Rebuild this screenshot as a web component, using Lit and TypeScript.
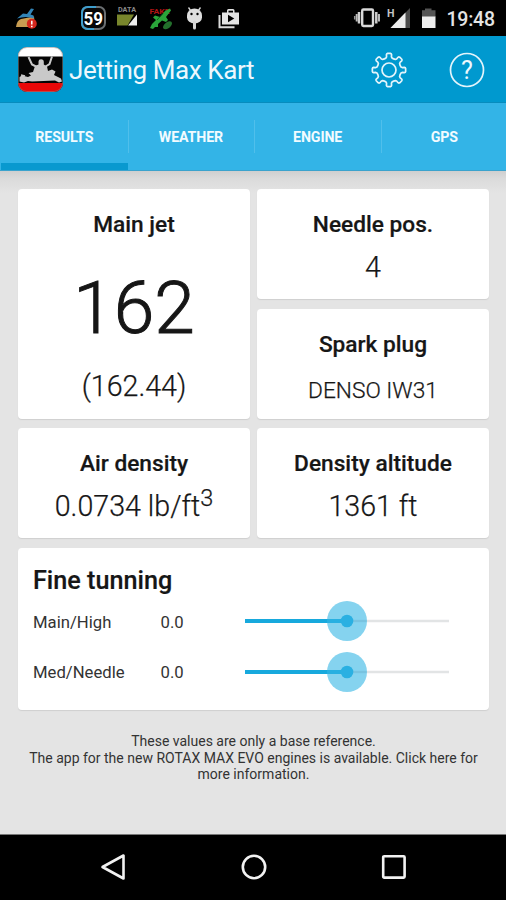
import { LitElement, html, css, svg } from "lit";
import { customElement, property } from "lit/decorators.js";

const gearPath = (() => {
  const at = (r: number, deg: number) => {
    const a = ((deg - 90) * Math.PI) / 180;
    return `${(18 + r * Math.cos(a)).toFixed(2)} ${(18 + r * Math.sin(a)).toFixed(2)}`;
  };
  let d = "";
  for (let i = 0; i < 8; i++) {
    const c = i * 45;
    d += `${i ? "L" : "M"}${at(12.4, c - 14)}L${at(13.4, c - 10.5)}L${at(15.6, c - 9.5)}Q${at(16.6, c - 8.5)} ${at(16.7, c - 5)}`;
    d += `L${at(16.7, c + 5)}Q${at(16.6, c + 8.5)} ${at(15.6, c + 9.5)}L${at(13.4, c + 10.5)}L${at(12.4, c + 14)}`;
    d += `Q${at(11.8, c + 22.5)} ${at(12.4, c + 31)}`;
  }
  return d + "Z";
})();

@customElement("status-bar")
class StatusBar extends LitElement {
  static styles = css`
    :host { display: flex; height: 36px; background: #000; }
    svg { display: block; width: 506px; height: 36px; }
    .clock { font: 500 19.5px Roboto, sans-serif; fill: #e4e4e4; }
    .count { font: 700 18.5px Roboto, sans-serif; fill: #fff; }
    .tiny { font: 700 6.5px Roboto, sans-serif; fill: #8b8b8b; }
    .fake { font: 700 7.5px Roboto, sans-serif; fill: #b01414; }
    .net { font: 700 11px Roboto, sans-serif; fill: #c4c4c4; }
  `;
  render() {
    return html`<svg viewBox="0 0 506 36">
      ${svg`
      <path d="M16 27Q17 20 21 19L34 16.500L35 27Z" fill="#c99d52"/>
      <path d="M17 18.500L23 13.500L27 14L31 8.500L34 9L30.500 14.500L33.500 15.500L34 18.500Q26 15.500 17 18.500Z" fill="#3285b8"/>
      <circle cx="31.800" cy="23.800" r="5" fill="#d4261d"/>
      <path d="M31.800 20.800v3.600M31.800 25.800v1.400" stroke="#fff" stroke-width="1.500"/>

      <rect x="82" y="7" width="23" height="22" rx="6" fill="#070707" stroke="#6b6f72" stroke-width="2"/>
      <path d="M94 29H88Q82 29 82 23V13Q82 7 88 7H96" fill="none" stroke="#3e9dcc" stroke-width="2"/>
      <text class="count" x="83.500" y="25" textLength="19.500" lengthAdjust="spacingAndGlyphs">59</text>

      <text class="tiny" x="118" y="12" textLength="18" lengthAdjust="spacingAndGlyphs">DATA</text>
      <path d="M117 14.500H134L127.500 25.500H117Z" fill="#79862c"/>
      <path d="M137 14.500V25.500H128Z" fill="#ededed"/>

      <text class="fake" x="149.500" y="13.800" textLength="20" lengthAdjust="spacingAndGlyphs">FAKE</text>
      <path d="M150 28L152 24L156 20L153 17.500L155 15.500L160 17L165 11L170 8.500L171 10.500L166 17L168 20L166 22L162 20.500L158 24L158 27L155 27L153 29Z" fill="#2aa43a"/>
      <path d="M157 20L163 13.500" stroke="#145c1e" stroke-width="1"/>
      <ellipse cx="167.500" cy="25.300" rx="5.200" ry="3" transform="rotate(-38 167.500 25.300)" fill="#23702c"/>

      <path d="M188.500 7.500L191 11M200.500 7.500L198 11" stroke="#d9d9d9" stroke-width="1.300"/>
      <path d="M187 15.500A7.500 7 0 0 1 202 15.500V17.500A7.500 6 0 0 1 187 17.500Z" fill="#dedede"/>
      <circle cx="191.500" cy="14" r="1.200" fill="#000"/><circle cx="197.500" cy="14" r="1.200" fill="#000"/>
      <path d="M194.500 22V28" stroke="#d5d5d5" stroke-width="3" stroke-linecap="round"/>

      <path d="M219.500 15V27.200H234.500" fill="none" stroke="#dadada" stroke-width="2"/>
      <path d="M222 12.500H227V10.500Q227 9 228.500 9H233Q234.500 9 234.500 10.500V12.500H239V24.500H222Z" fill="#e4e4e4"/>
      <path d="M228.500 12.500V10.700H233V12.500Z" fill="#000"/>
      <path d="M228 14.700V22.300L234.300 18.500Z" fill="#000"/>

      <rect x="362.200" y="9.500" width="10.800" height="16.500" rx="1.200" fill="#000" stroke="#dadada" stroke-width="2.400"/>
      <path d="M359 12V23.500M376.300 12V23.500" stroke="#cfcfcf" stroke-width="2.500"/>
      <path d="M356.700 14V21.500M379 14V21.500" stroke="#bababa" stroke-width="2"/>
      <path d="M354.700 16V19.500" stroke="#999" stroke-width="1.500"/>

      <text class="net" x="387" y="17" textLength="7.500" lengthAdjust="spacingAndGlyphs">H</text>
      <path d="M410 8V28H390.500Z" fill="#4b4b4b"/>
      <path d="M405.500 12.600V28H390.500Z" fill="#ededed"/>

      <path d="M425 8.500H431.500V10.200H435.500V17H422V10.200H425Z" fill="#545454"/>
      <rect x="422" y="16.500" width="13.500" height="11.500" fill="#ededed"/>
      <text class="clock" x="446.500" y="26" textLength="48.500">19:48</text>`}
    </svg>`;
  }
}

@customElement("app-header")
class AppHeader extends LitElement {
  static styles = css`
    :host {
      display: flex; align-items: center; height: 67px; box-sizing: border-box;
      padding: 0 21px 0 18px; background: #0099cf; color: #eef8fd;
      font-family: Roboto, sans-serif; box-shadow: inset 0 -1px 0 #078cbe;
    }
    svg { display: block; flex: none; }
    .title { flex: 1; margin-left: 6px; font-size: 26px; line-height: 34px; white-space: nowrap; letter-spacing: -0.4px; padding-top: 1px; }
    .help { margin-left: 42px; }
    .q { font: 400 25px Roboto, sans-serif; fill: #eef8fd; }
  `;
  render() {
    return html`
      <svg width="45" height="45" viewBox="0 0 45 45">
        <clipPath id="r"><rect width="45" height="45" rx="9"/></clipPath>
        <g clip-path="url(#r)">
          <rect width="45" height="45" fill="#050505"/>
          <rect width="45" height="9.500" fill="#fff"/>
          <rect y="36" width="45" height="9" fill="#e90808"/>
          <path d="M10.500 10L14 17.500L20 20.500M34 9.500L31.500 17L26 20.500" fill="none" stroke="#c9c9c9" stroke-width="2"/>
          <path d="M17 19L20.500 17.500V14.500Q20.500 12.300 23 12.300Q25.800 12.300 25.800 15V17.500L29 19.500L30 24L34 22.500L37.500 24.500L36 28L43 31.500L44 34.500L41 35.500L37 33.500L14 34.500L10 34L6 35.500L1.500 34.500L1.500 30L4 28.500L10 30L13 28.500L10.500 26L15 25Z" fill="#c9c9c9"/>
          <path d="M3 28L7 29" stroke="#c9c9c9" stroke-width="1.500"/>
        </g>
        <rect x=".5" y=".5" width="44" height="44" rx="8.500" fill="none" stroke="#8c8c8c" stroke-width=".5"/>
      </svg>
      <div class="title">Jetting Max Kart</div>
      <svg width="36" height="36" viewBox="0 0 36 36" fill="none" stroke="#e3f4fb" stroke-width="1.700" stroke-linejoin="round">
        <path d=${gearPath}/><circle cx="18" cy="18" r="7"/>
      </svg>
      <svg class="help" width="36" height="36" viewBox="0 0 36 36">
        <circle cx="18" cy="18" r="16.500" fill="none" stroke="#e3f4fb" stroke-width="1.700"/>
        <text class="q" x="18" y="26.500" text-anchor="middle">?</text>
      </svg>
    `;
  }
}

@customElement("tab-bar")
class TabBar extends LitElement {
  static styles = css`
    :host {
      display: grid; grid-template-columns: repeat(4, 126.670px); height: 67.500px; padding-left: 1px; overflow: hidden;
      background: #33b4e7; color: #f2fbff; font: 700 14.200px/20px Roboto, sans-serif; letter-spacing: -0.100px;
      border-bottom: 1px solid #3ba3cd; box-sizing: border-box;
    }
    .tab { display: flex; align-items: center; justify-content: center; border-bottom: 7px solid transparent; padding-top: 9px; box-sizing: border-box; position: relative; }
    .on { border-bottom-color: #0999cf; }
    .tab + .tab::before { content: ""; position: absolute; left: 0; top: 17px; width: 1px; height: 33px; background: #50bfeb; }
  `;
  render() {
    return html`${["RESULTS", "WEATHER", "ENGINE", "GPS"].map(
      (t, i) => html`<div class="tab ${i ? "" : "on"}">${t}</div>`
    )}`;
  }
}

@customElement("tune-slider")
class TuneSlider extends LitElement {
  @property() label = "";
  @property() value = "";
  static styles = css`
    :host { display: flex; align-items: center; height: 50.500px; font: 400 16.700px/20px Roboto, sans-serif; color: #333; }
    .label { width: 127.500px; white-space: nowrap; padding-top: 2.500px; }
    .value { width: 84.500px; padding-top: 2.500px; }
    svg { display: block; overflow: visible; }
  `;
  render() {
    return html`
      <div class="label">${this.label}</div>
      <div class="value">${this.value}</div>
      <svg width="204" height="40" viewBox="0 0 204 40">
        <path d="M102 20H204" stroke="#e2e4e5" stroke-width="2.500"/>
        <path d="M0 20H102" stroke="#17a9dd" stroke-width="4"/>
        <circle cx="102" cy="20" r="20" fill="#33b5e5" fill-opacity=".6"/>
        <path d="M102 20H121" stroke="#78c2de" stroke-width="1.500"/>
        <circle cx="102" cy="20" r="6.300" fill="#2ab0e2"/>
      </svg>
    `;
  }
}

@customElement("app-root")
class AppRoot extends LitElement {
  static styles = css`
    :host { display: flex; flex-direction: column; width: 506px; height: 900px; overflow: hidden; background: #e4e4e4; font-family: Roboto, sans-serif; color: #161616; }
    status-bar, app-header, tab-bar, .nav { flex: none; }
    .body { flex: 1; min-height: 0; padding: 18.500px 17px 0 18px; background: linear-gradient(#cfcfcf, #dbdbdb 8px, #e4e4e4 22px); }
    .grid { display: grid; grid-template-columns: 232px 232px; grid-template-rows: 110px 110px 110px 162.500px; gap: 9.500px 7px; }
    .card { background: #fff; border-radius: 4px; box-shadow: 0 1px 1px #cfcfcf; text-align: center; padding-top: 22px; box-sizing: border-box; white-space: nowrap; }
    .tall { grid-row: span 2; }
    .wide { grid-column: span 2; text-align: left; padding: 17.300px 15px 0; }
    .name { font-size: 22.700px; line-height: 28px; font-weight: 500; -webkit-text-stroke: 0.200px #161616; }
    .value { font-size: 28.600px; line-height: 34px; margin-top: 11px; font-weight: 300; -webkit-text-stroke: 0.250px #161616; }
    .plug { font-size: 22.700px; margin-top: 15.200px; }
    .big { font-size: 73px; line-height: 80px; margin-top: 29px; font-weight: 300; -webkit-text-stroke: 1px #161616; }
    .exact { margin-top: 20.500px; }
    .sup { font-size: 23.500px; line-height: 0; vertical-align: 10.500px; }
    .section { font-size: 25.200px; line-height: 32px; font-weight: 500; -webkit-text-stroke: 0.200px #161616; }
    .rows { display: flex; flex-direction: column; margin-top: -0.800px; }
    .note { margin-top: 23px; text-align: center; font-size: 14px; line-height: 16.500px; color: #333; white-space: nowrap; }
    .nav { height: 66.500px; background: #000; border-top: 1px solid #777; box-sizing: border-box; display: flex; align-items: center; justify-content: space-between; padding: 0 98px 0 99px; }
    .nav svg { display: block; fill: none; stroke: #f2f2f2; stroke-width: 2.600; stroke-linejoin: round; }
  `;
  render() {
    return html`
      <status-bar></status-bar>
      <app-header></app-header>
      <tab-bar></tab-bar>
      <div class="body">
        <div class="grid">
          <div class="card tall">
            <div class="name">Main jet</div>
            <div class="value big">162</div>
            <div class="value exact">(162.44)</div>
          </div>
          <div class="card"><div class="name">Needle pos.</div><div class="value">4</div></div>
          <div class="card"><div class="name">Spark plug</div><div class="value plug">DENSO IW31</div></div>
          <div class="card"><div class="name">Air density</div><div class="value">0.0734 lb/ft<span class="sup">3</span></div></div>
          <div class="card"><div class="name">Density altitude</div><div class="value">1361 ft</div></div>
          <div class="card wide">
            <div class="section">Fine tunning</div>
            <div class="rows">
              <tune-slider label="Main/High" value="0.0"></tune-slider>
              <tune-slider label="Med/Needle" value="0.0"></tune-slider>
            </div>
          </div>
        </div>
        <div class="note">These values are only a base reference.<br />The app for the new ROTAX MAX EVO engines is available. Click here for<br />more information.</div>
      </div>
      <div class="nav">
        <svg width="28" height="28" viewBox="0 0 28 28"><path d="M3.500 14L24.500 2.500V25.500Z"/></svg>
        <svg width="28" height="28" viewBox="0 0 28 28"><circle cx="14" cy="14" r="11.200"/></svg>
        <svg width="28" height="28" viewBox="0 0 28 28"><rect x="3.200" y="3.200" width="21.400" height="21.400" rx="1"/></svg>
      </div>
    `;
  }
}
